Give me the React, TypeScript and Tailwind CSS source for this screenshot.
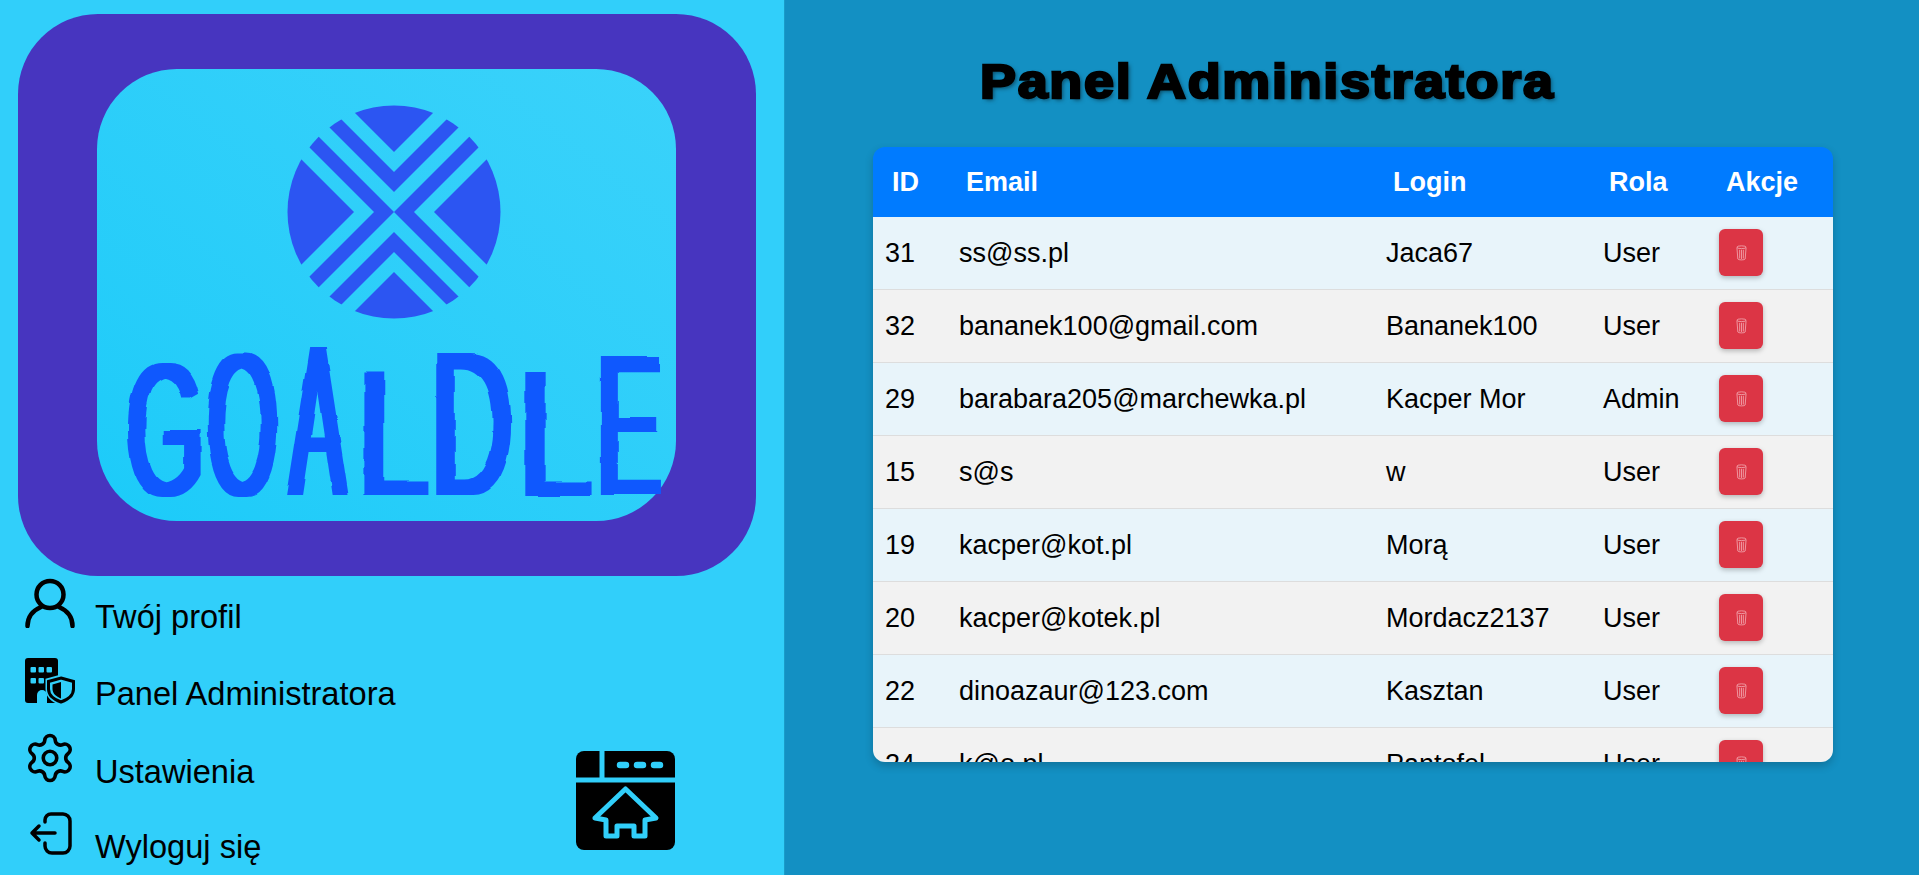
import type { ReactNode } from 'react';
import { Settings } from 'lucide-react';

const users = [
  { id: 31, email: 'ss@ss.pl', login: 'Jaca67', role: 'User' },
  { id: 32, email: 'bananek100@gmail.com', login: 'Bananek100', role: 'User' },
  { id: 29, email: 'barabara205@marchewka.pl', login: 'Kacper Mor', role: 'Admin' },
  { id: 15, email: 's@s', login: 'w', role: 'User' },
  { id: 19, email: 'kacper@kot.pl', login: 'Morą', role: 'User' },
  { id: 20, email: 'kacper@kotek.pl', login: 'Mordacz2137', role: 'User' },
  { id: 22, email: 'dinoazaur@123.com', login: 'Kasztan', role: 'User' },
  { id: 24, email: 'k@o.pl', login: 'Pantofel', role: 'User' },
];

// x, scaleX, scaleY for each brush letter of the logo
const letters = [
  { ch: 'G', x: 30, sx: 0.99, sy: 1.89 },
  { ch: 'O', x: 110.5, sx: 0.9, sy: 2.04 },
  { ch: 'A', x: 193, sx: 0.82, sy: 2.14 },
  { ch: 'L', x: 261, sx: 1.27, sy: 1.78 },
  { ch: 'D', x: 334, sx: 1.13, sy: 2.06 },
  { ch: 'L', x: 421.5, sx: 1.32, sy: 1.78 },
  { ch: 'E', x: 500, sx: 0.96, sy: 2.0 },
];

function Logo() {
  return (
    <svg viewBox="0 0 579 452" className="w-[579px] h-[452px]">
      <defs>
        <clipPath id="disc">
          <circle cx="0" cy="0" r="106.5" />
        </clipPath>
        {/* widens only the vertical strokes and roughens the edges, for the brush look */}
        <filter
          id="brush"
          x="0"
          y="0"
          width="100%"
          height="100%"
          filterUnits="userSpaceOnUse"
          primitiveUnits="userSpaceOnUse"
          colorInterpolationFilters="sRGB"
        >
          <feMorphology in="SourceGraphic" operator="dilate" radius="4 0" result="wide" />
          <feTurbulence type="fractalNoise" baseFrequency="0.012 0.05" numOctaves="1" seed="4" result="noise" />
          <feDisplacementMap in="wide" in2="noise" scale="5" xChannelSelector="R" yChannelSelector="G" />
        </filter>
      </defs>
      <g transform="translate(297 143)" clipPath="url(#disc)" fill="#2c55f2">
        <polygon points="0,-60 -130,-190 130,-190" />
        <polygon points="0,60 -130,190 130,190" />
        <polygon points="-40,0 -170,130 -170,-130" />
        <polygon points="40,0 170,130 170,-130" />
        <polygon points="0,-20 130,-150 130,-170 0,-40 -130,-170 -130,-150" />
        <polygon points="0,20 130,150 130,170 0,40 -130,170 -130,150" />
        <polygon points="0,0 -130,130 -150,130 -20,0 -150,-130 -130,-130" />
        <polygon points="0,0 130,130 150,130 20,0 150,-130 130,-130" />
      </g>
      <g fill="#0f58fe" fontFamily="'Liberation Sans', sans-serif" fontSize="100" filter="url(#brush)">
        {letters.map((l, i) => (
          <text key={i} transform={`translate(${l.x} 426) scale(${l.sx} ${l.sy})`}>
            {l.ch}
          </text>
        ))}
      </g>
    </svg>
  );
}

function UserIcon() {
  return (
    <svg viewBox="0 0 50 50" className="w-[50px] h-[50px] shrink-0" fill="none" stroke="#000" strokeWidth="4.5" strokeLinecap="round">
      <circle cx="25" cy="16.5" r="13.5" />
      <path d="M2.5 48 C2.5 38 9 32 16 29 M47.5 48 C47.5 38 41 32 34 29" />
    </svg>
  );
}

function AdminIcon() {
  return (
    <svg viewBox="0 0 50 50" className="w-[50px] h-[50px] shrink-0">
      <rect x="0" y="3" width="33" height="45" rx="3" fill="#000" />
      <g fill="#31cffa">
        <rect x="5.5" y="12" width="5.5" height="5.5" rx="1" />
        <rect x="13.5" y="12" width="5.5" height="5.5" rx="1" />
        <rect x="21.5" y="12" width="5.5" height="5.5" rx="1" />
        <rect x="5.5" y="23" width="5.5" height="5.5" rx="1" />
        <rect x="13.5" y="23" width="5.5" height="5.5" rx="1" />
        <path d="M12 48 V40 a5 5 0 0 1 10 0 V48 Z" />
      </g>
      <path d="M36 21 L50 25 V34 C50 42 44 46 36 49 C28 46 22 42 22 34 V25 Z" fill="#31cffa" stroke="#31cffa" strokeWidth="3" />
      <path d="M36 23 L48.5 26.5 V34 C48.5 41 43 44.5 36 47 C29 44.5 23.5 41 23.5 34 V26.5 Z" fill="#31cffa" stroke="#000" strokeWidth="3" />
      <path d="M36 27 V43.5 C31 41.5 27.5 38.5 27.5 34 V29.5 Z" fill="#000" />
    </svg>
  );
}

function ExitIcon() {
  return (
    <svg viewBox="0 0 50 50" className="w-[50px] h-[50px] shrink-0" fill="none" stroke="#000" strokeWidth="3.5" strokeLinecap="round" strokeLinejoin="round">
      <path d="M20 14 V12 a6 6 0 0 1 6-6 H38 a7 7 0 0 1 7 7 V38 a7 7 0 0 1 -7 7 H27 a7 7 0 0 1 -7-7 V35" />
      <path d="M30 25 H7 M14 18 L7 25 L14 32" />
    </svg>
  );
}

function HomeTile() {
  return (
    <svg viewBox="0 0 99 99" className="w-[99px] h-[99px]">
      <rect width="99" height="99" rx="8" fill="#000" />
      <g stroke="#31cffa" fill="none">
        <path d="M0 29 H99" strokeWidth="5" />
        <path d="M26 0 V27" strokeWidth="5" />
        <path d="M44 14 H50 M61 14 H67 M78 14 H84" strokeWidth="6.5" strokeLinecap="round" />
        <path
          d="M49.5 38 L80 67 L69 69 V85 H58 V75 H41 V85 H30 V69 L19 67 Z"
          strokeWidth="5"
          strokeLinejoin="round"
        />
      </g>
    </svg>
  );
}

function TrashIcon() {
  return (
    <svg viewBox="0 0 12 17" className="w-[11px] h-[16px]" fill="none" stroke="#f6b9c0" strokeWidth="0.8">
      <ellipse cx="6" cy="2.2" rx="5" ry="1.5" />
      <path d="M1 2.5 L2 15 C2.5 16.4 9.5 16.4 10 15 L11 2.5" />
      <path d="M4 5 V14.5 M6 5 V15 M8 5 V14.5" />
    </svg>
  );
}

function MenuItem({ icon, label }: { icon: ReactNode; label: string }) {
  return (
    <li className="h-[76.7px] flex items-baseline gap-5 text-[32.6px] leading-none text-black">
      {icon}
      <a href="#">{label}</a>
    </li>
  );
}

export default function App() {
  return (
    <div className="h-screen w-full flex overflow-hidden font-['Liberation_Sans',Arial,sans-serif]">
      <aside className="w-[785px] shrink-0 bg-[#31cffa] border-r border-[#1a9cc9] pt-[14px] pl-[18px]">
        <div className="w-[738px] h-[562px] rounded-[80px] bg-[#4735bf] pt-[55px] pl-[79px]">
          <div className="w-[579px] h-[452px] rounded-[80px] bg-gradient-to-tr from-[#1bcbf9] to-[#3ad2fa]">
            <Logo />
          </div>
        </div>
        <div className="flex justify-between -ml-[18px] pr-[109px]">
          <ul className="pl-[25px] pt-[2px]">
            <MenuItem icon={<UserIcon />} label="Twój profil" />
            <MenuItem icon={<AdminIcon />} label="Panel Administratora" />
            <MenuItem
              icon={<Settings className="w-[54px] h-[54px] shrink-0 -mx-[2px] -mt-[2px] translate-y-[2px]" strokeWidth={1.6} color="#000" />}
              label="Ustawienia"
            />
            <MenuItem icon={<ExitIcon />} label="Wyloguj się" />
          </ul>
          <div className="pt-[175px]">
            <HomeTile />
          </div>
        </div>
      </aside>

      <main className="flex-1 bg-[#1390c3]">
        <h1 className="pl-[195px] pt-[52px] h-[147px] text-[48px] leading-[60px] font-bold text-black">
          <span className="inline-block origin-left scale-x-[1.12] tracking-[1.6px] whitespace-nowrap [-webkit-text-stroke:2.5px_black] [text-shadow:2px_2px_4px_rgba(0,0,0,0.5)]">
            Panel Administratora
          </span>
        </h1>
        <div className="ml-[88px] w-[960px] h-[615px] overflow-hidden rounded-xl shadow-[0_4px_8px_rgba(0,0,0,0.2)]">
          <table className="w-full table-fixed border-separate border-spacing-0 text-[27px] text-black">
            <colgroup>
              <col className="w-[74px]" />
              <col className="w-[427px]" />
              <col className="w-[217px]" />
              <col className="w-[115px]" />
              <col />
            </colgroup>
            <thead>
              <tr className="h-[70px] bg-[#007bff] text-white text-left">
                <th className="pl-[19px] font-bold">ID</th>
                <th className="pl-[19px] font-bold">Email</th>
                <th className="pl-[19px] font-bold">Login</th>
                <th className="pl-[18px] font-bold">Rola</th>
                <th className="pl-[20px] font-bold">Akcje</th>
              </tr>
            </thead>
            <tbody>
              {users.map((u, i) => (
                <tr key={u.id} className={`h-[73px] ${i % 2 === 0 ? 'bg-[#e8f4fa]' : 'bg-[#f2f2f2]'}`}>
                  <td className="pl-3 border-b border-[#ddd]">{u.id}</td>
                  <td className="pl-3 border-b border-[#ddd]">{u.email}</td>
                  <td className="pl-3 border-b border-[#ddd]">{u.login}</td>
                  <td className="pl-3 border-b border-[#ddd]">{u.role}</td>
                  <td className="pl-[13px] pb-[1px] border-b border-[#ddd]">
                    <button className="w-[44px] h-[47px] rounded-md bg-[#dc3545] shadow-[0_2px_5px_rgba(0,0,0,0.25)] flex items-center justify-center">
                      <TrashIcon />
                    </button>
                  </td>
                </tr>
              ))}
            </tbody>
          </table>
        </div>
      </main>
    </div>
  );
}
